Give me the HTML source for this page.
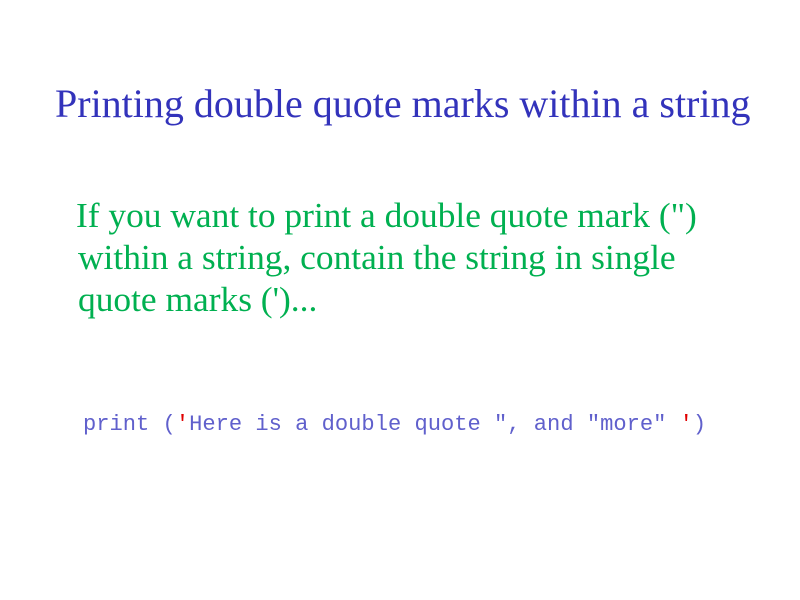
<!DOCTYPE html>
<html><head><style>
body{margin:0;width:800px;height:600px;background:#fff;position:relative;overflow:hidden}
.t{position:absolute;left:55px;top:80px;font:40px "Liberation Serif",serif;color:#3333bb;white-space:nowrap}
.g{position:absolute;left:76px;top:194px;font:35.4px/42px "Liberation Serif",serif;color:#00b050;white-space:nowrap}
.g span{padding-left:2px}
.c{position:absolute;left:83px;top:412px;font:22.1px "Liberation Mono",monospace;color:#6060cc;white-space:pre}
.r{color:#e00000}
</style></head><body>
<div class="t">Printing double quote marks within a string</div>
<div class="g">If you want to print a double quote mark (")<br><span>within a string, contain the string in single</span><br><span>quote marks (')...</span></div>
<div class="c">print (<span class="r">'</span>Here is a double quote ", and "more" <span class="r">'</span>)</div>
</body></html>
